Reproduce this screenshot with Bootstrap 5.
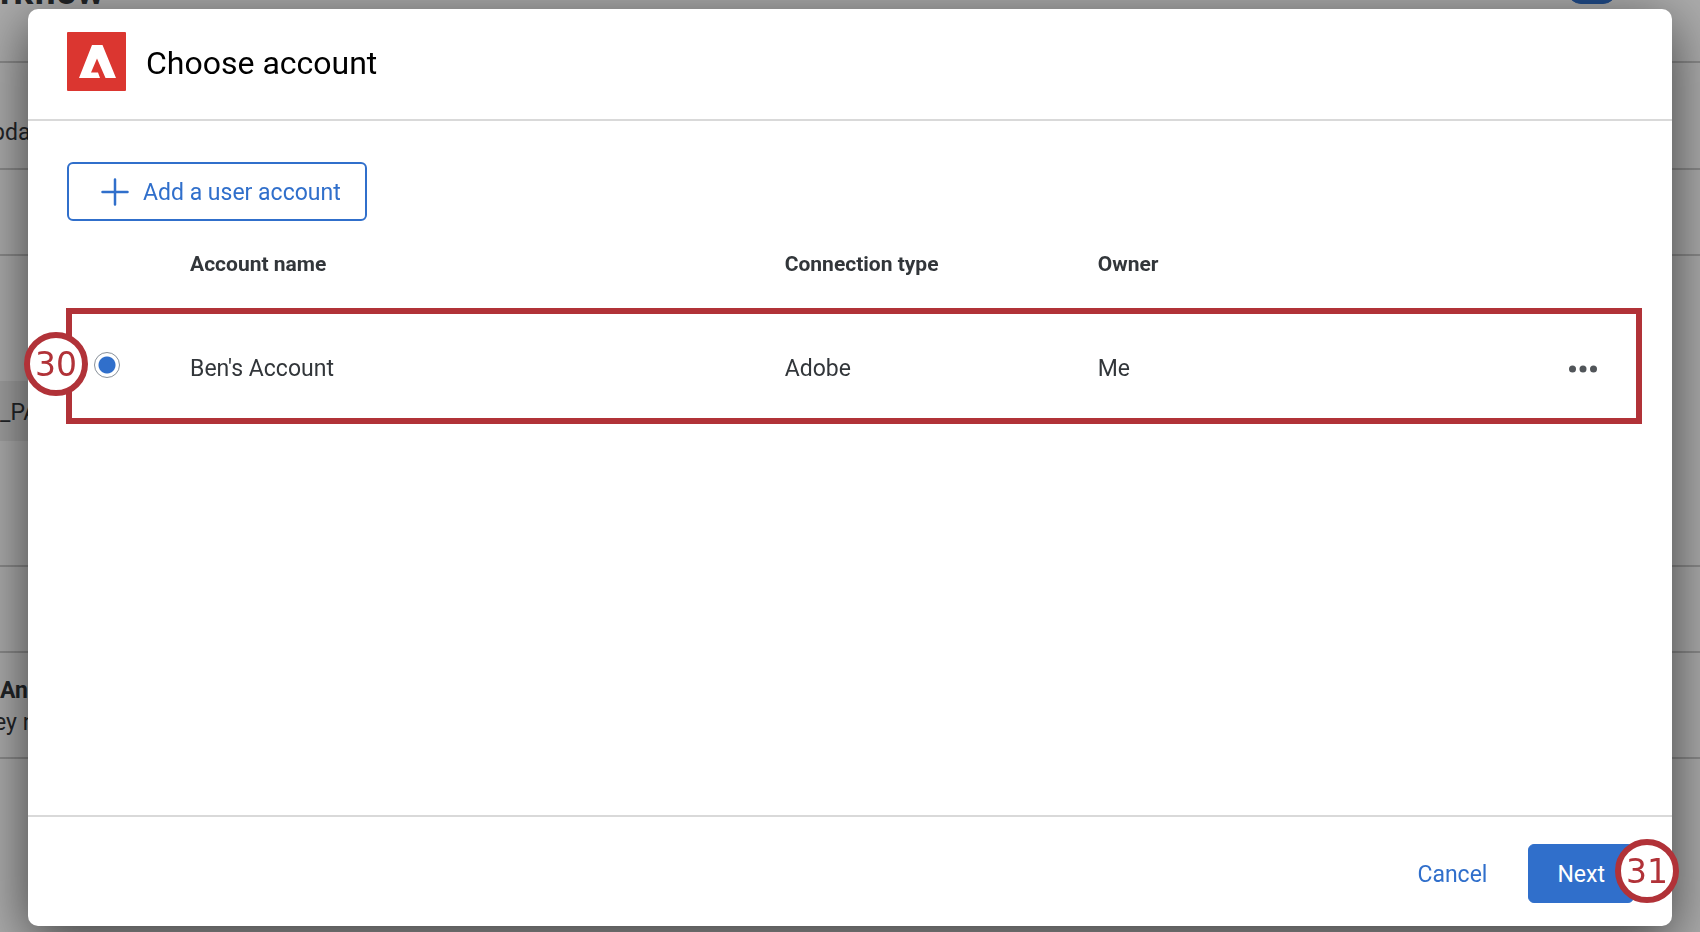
<!DOCTYPE html>
<html lang="en">
<head>
<meta charset="utf-8">
<meta name="viewport" content="width=device-width, initial-scale=1">
<title>Choose account</title>
<link href="https://cdn.jsdelivr.net/npm/bootstrap@5.3.0/dist/css/bootstrap.min.css" rel="stylesheet">
<style>
  :root { --brand: #306fcb; --note: #b13238; --ink: #32363a; }
  body { font-family: Roboto, "Liberation Sans", sans-serif; font-size: 23px; line-height: 32px; color: var(--ink); }

  /* Workflow page behind the dialog */
  .flow-row { border-bottom: 2px solid #cdcdcd; white-space: nowrap; }
  .flow-head { height: 63px; }
  .flow-head h1 { font-size: 37px; line-height: 36px; margin-top: -26px; }
  .flow-head .form-check-input { width: 50px; height: 28px; margin-top: -24px; margin-right: 83px; background-color: #306fcb; border-color: #306fcb; }
  .flow-update { height: 107px; padding-top: 34px; text-indent: -8px; }
  .flow-blank { height: 86px; }
  .flow-params { height: 311px; padding-top: 125px; }
  .flow-param { width: 28px; height: 60px; padding-top: 4px; background: #ededed; }
  .flow-action { height: 106px; padding-top: 4px; }
  .flow-action span { text-indent: -6px; }

  .modal-backdrop { --bs-backdrop-opacity: .33; }
  .account-dialog { max-width: none; margin: 9px 28px 6px; height: calc(100vh - 15px); }
  .account-dialog .modal-content { height: 100%; border: 0; border-radius: 10px; color: var(--ink); box-shadow: 0 14px 56px rgba(0,0,0,.64); }
  .account-dialog .modal-header { padding: 23px 39px 28px; border-bottom: 2px solid #d9d9d9; justify-content: flex-start; gap: 20px; border-radius: 0; }
  .account-dialog .modal-title { font-size: 32px; line-height: 40px; padding-top: 3px; font-weight: 400; color: #000; }
  .account-dialog .modal-body { padding: 41px 40px 40px 39px; }
  .account-dialog .modal-footer { padding: 27px 38px 23px; border-top: 2px solid #d9d9d9; gap: 12px; }
  .account-dialog .modal-footer > * { margin: 0; }
  .btn { --bs-btn-font-size: 23px; --bs-btn-border-radius: 6px; --bs-btn-padding-x: 28px; height: 59px; padding-top: 8px; padding-bottom: 4px; }
  .btn-next { --bs-btn-color: #fff; --bs-btn-bg: var(--brand); --bs-btn-border-color: var(--brand); --bs-btn-hover-color: #fff; --bs-btn-hover-bg: #285fae; }
  .btn-cancel { --bs-btn-color: var(--brand); --bs-btn-hover-color: #285fae; }
  .btn-add { --bs-btn-color: var(--brand); --bs-btn-border-color: var(--brand); --bs-btn-hover-color: var(--brand); --bs-btn-hover-bg: #eef4fc; border-width: 2px; gap: 14px; padding: 0 24px 0 32px; }
  .btn-add span { padding-top: 3px; }

  .account-table { table-layout: fixed; width: 100%; }
  .account-table th { height: 87px; font-size: 21px; line-height: 28px; font-weight: 700; padding-bottom: 2px; }
  .account-table td { height: 115px; padding-top: 8px; border-bottom: 1px solid #e5e5e5; }
  .col-pick { width: 7.8%; }
  .col-name { width: 38%; }
  .col-type { width: 20%; }
  .col-more { width: 8%; }
  .pick-radio.form-check-input { display: block; width: 26px; height: 26px; margin: -8px 0 0 26px; border: 1px solid #89919a; }
  .pick-radio.form-check-input:checked { background: radial-gradient(circle, var(--brand) 8px, #fff 9px); }
  .more-btn { display: block; margin-left: auto; margin-right: 27px; padding: 6px; border: 0; background: none; }
  .more-btn svg { display: block; }

  /* Step annotations */
  .note-box { position: absolute; inset: 87px -10px 0 -1px; border: 6px solid var(--note); pointer-events: none; }
  .note-step { position: absolute; width: 64px; height: 64px; border: 6px solid var(--note); border-radius: 50%; background: #fff; color: var(--note); font: 33px/54px "DejaVu Sans", sans-serif; text-align: center; pointer-events: none; }
  .step-row { left: -43px; bottom: 28px; }
  .step-next { right: -45px; top: -5px; }
</style>
</head>
<body>
<main class="overflow-hidden">
  <div class="flow-row flow-head d-flex justify-content-between form-switch p-0">
    <h1 class="fw-bold">rkflow</h1>
    <input class="form-check-input" type="checkbox" role="switch" aria-label="Enable workflow" checked>
  </div>
  <div class="flow-row flow-update d-flex align-items-center">pda</div>
  <div class="flow-row flow-blank"></div>
  <div class="flow-row flow-params"><div class="flow-param d-flex align-items-center">_PA</div></div>
  <div class="flow-row flow-blank"></div>
  <div class="flow-row flow-action d-flex flex-column justify-content-center"><b>An</b><span>ey n</span></div>
</main>

<div class="modal-backdrop show"></div>
<div class="modal d-block overflow-hidden" role="dialog" aria-modal="true" aria-labelledby="dialogTitle">
  <div class="modal-dialog account-dialog">
    <div class="modal-content">
      <div class="modal-header">
        <svg width="59" height="59" viewBox="0 0 59 59" aria-hidden="true">
          <rect width="59" height="59" rx="1" fill="#db3630"/>
          <path fill="#fff" d="M25 13h10.500L49 46H38.500L30 26.500L24 40.500h7L33 46H12Z"/>
        </svg>
        <h2 class="modal-title" id="dialogTitle">Choose account</h2>
      </div>
      <div class="modal-body">
        <button type="button" class="btn btn-add d-flex align-items-center">
          <svg width="28" height="28" viewBox="0 0 28 28" fill="none" stroke="currentColor" stroke-width="2.500" stroke-linecap="round" aria-hidden="true"><path d="M14 1.500v25M1.500 14h25"/></svg>
          <span>Add a user account</span>
        </button>
        <div class="position-relative">
          <table class="account-table">
            <thead>
              <tr>
                <th class="col-pick" aria-label="Selected"></th>
                <th class="col-name" scope="col">Account name</th>
                <th class="col-type" scope="col">Connection type</th>
                <th scope="col">Owner</th>
                <th class="col-more" aria-label="Actions"></th>
              </tr>
            </thead>
            <tbody>
              <tr>
                <td><input class="form-check-input pick-radio" type="radio" name="account" id="acc1" checked></td>
                <td><label for="acc1">Ben's Account</label></td>
                <td>Adobe</td>
                <td>Me</td>
                <td><button type="button" class="more-btn" aria-label="More actions"><svg width="30" height="8" viewBox="0 0 30 8" fill="#515559" aria-hidden="true"><circle cx="4.500" cy="4" r="3.500"/><circle cx="15" cy="4" r="3.500"/><circle cx="25.500" cy="4" r="3.500"/></svg></button></td>
              </tr>
            </tbody>
          </table>
          <div class="note-box"></div>
          <div class="note-step step-row">30</div>
        </div>
      </div>
      <div class="modal-footer">
        <button type="button" class="btn btn-cancel">Cancel</button>
        <div class="position-relative">
          <button type="button" class="btn btn-next">Next</button>
          <div class="note-step step-next">31</div>
        </div>
      </div>
    </div>
  </div>
</div>
<script src="https://cdn.jsdelivr.net/npm/bootstrap@5.3.0/dist/js/bootstrap.bundle.min.js"></script>
</body>
</html>
